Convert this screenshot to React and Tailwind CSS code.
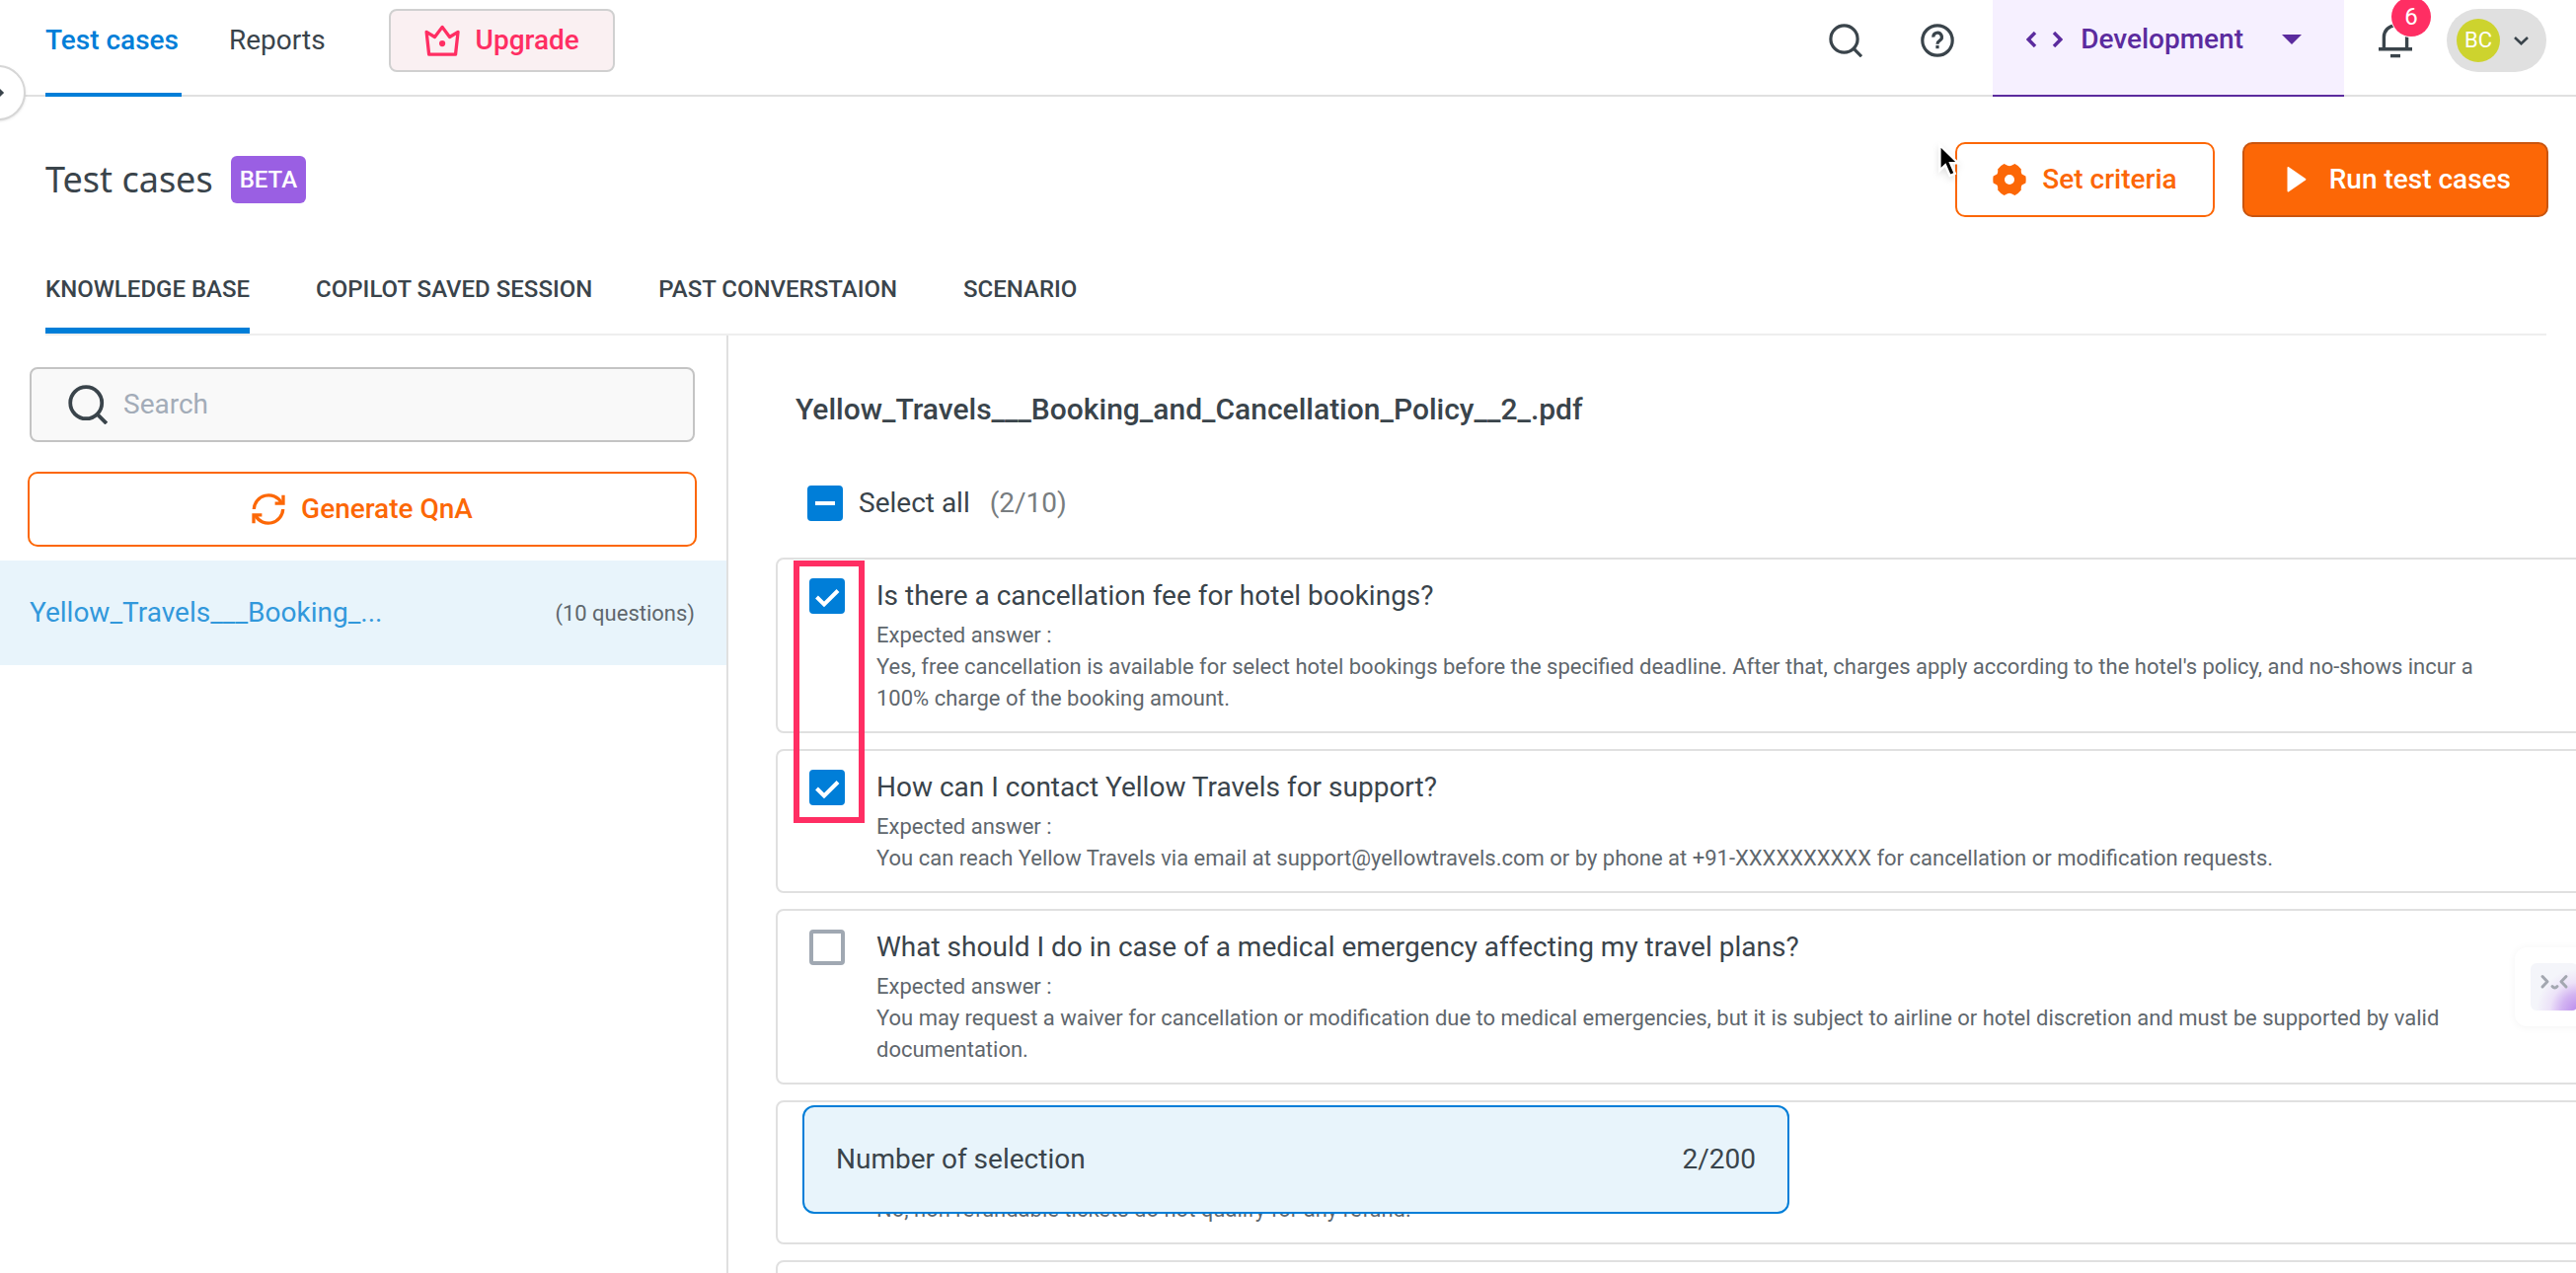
import React from 'react';

const cases = [
  {
    q: 'Is there a cancellation fee for hotel bookings?',
    a: "Yes, free cancellation is available for select hotel bookings before the specified deadline. After that, charges apply according to the hotel's policy, and no-shows incur a 100% charge of the booking amount.",
    checked: true,
  },
  {
    q: 'How can I contact Yellow Travels for support?',
    a: 'You can reach Yellow Travels via email at support@yellowtravels.com or by phone at +91-XXXXXXXXXX for cancellation or modification requests.',
    checked: true,
  },
  {
    q: 'What should I do in case of a medical emergency affecting my travel plans?',
    a: 'You may request a waiver for cancellation or modification due to medical emergencies, but it is subject to airline or hotel discretion and must be supported by valid documentation.',
    checked: false,
  },
  {
    q: 'Do non refundable tickets qualify for a refund?',
    a: 'No, non refundable tickets do not qualify for any refund.',
    checked: false,
  },
  { q: 'Can I modify my booking?', a: 'Yes, subject to airline policy.', checked: false },
];

function SearchIcon({ className }) {
  return (
    <svg viewBox="0 0 34 34" className={className} fill="none" stroke="currentColor" strokeWidth="3.2" aria-hidden="true">
      <circle cx="15.5" cy="15.5" r="13.6" />
      <path d="M25 25.2L33 33.2" />
    </svg>
  );
}

function HelpIcon() {
  return (
    <svg viewBox="0 0 34 34" className="size-[34px]" fill="none" stroke="currentColor" strokeWidth="3.2" aria-hidden="true">
      <circle cx="17" cy="17" r="15.2" />
      <path d="M12.8 13.6a4.3 4.3 0 1 1 6.5 3.5c-1.6 1-2.3 1.7-2.3 3.6" />
      <path d="M15.4 23.6h3.2" />
    </svg>
  );
}

function CrownIcon() {
  return (
    <svg viewBox="0 0 37 34" className="h-[34px] w-9" fill="none" stroke="currentColor" strokeWidth="3.4" strokeLinejoin="round" aria-hidden="true">
      <path d="M2.2 8.2L10.8 13.4L18.6 3L26.3 13.4L35 8.2L32.4 31.6H4.8Z" />
      <circle cx="18.6" cy="20.2" r="3.2" fill="currentColor" stroke="none" />
    </svg>
  );
}

function GearIcon() {
  return (
    <svg viewBox="0 0 34 34" className="size-[34px]" fill="currentColor" fillRule="evenodd" aria-hidden="true">
      <path d="M33.4 13.4Q34 17 33.4 20.6L29.6 22.4Q28.4 24.2 28.9 27.6Q26 31.4 22.4 33L19 31.2Q17 30.4 15 31.2L11.6 33Q8 31.4 5.1 27.6Q5.6 24.2 4.4 22.4L.6 20.6Q0 17 .6 13.4L4.4 11.6Q5.6 9.8 5.1 6.4Q8 2.6 11.6 1L15 2.8Q17 3.6 19 2.8L22.4 1Q26 2.6 28.9 6.4Q28.4 9.8 29.6 11.6ZM17 12a5 5 0 1 0 0 10a5 5 0 1 0 0-10Z" />
    </svg>
  );
}

function PlayIcon() {
  return (
    <svg viewBox="0 0 34 34" className="size-[34px]" fill="currentColor" aria-hidden="true">
      <path d="M7.5 5v23.5a1 1 0 0 0 1.5.7L26 17.6a1 1 0 0 0 0-1.6L9 4.2a1 1 0 0 0-1.5.8Z" />
    </svg>
  );
}

function RefreshIcon() {
  return (
    <svg viewBox="0 0 34 34" className="size-[34px]" fill="none" stroke="currentColor" strokeWidth="3.3" aria-hidden="true">
      <path d="M2.3 17A14.8 14.8 0 0 1 30 10.4" />
      <path d="M23.6 11.2H32V2.8" />
      <path d="M31.7 17A14.8 14.8 0 0 1 4 23.6" />
      <path d="M10.4 22.8H2V31.2" />
    </svg>
  );
}

function BellIcon() {
  return (
    <svg viewBox="0 0 34 36" className="h-9 w-[34px]" fill="none" stroke="currentColor" strokeWidth="3.4" aria-hidden="true">
      <path d="M5.4 27V14.5a11.6 11.6 0 0 1 23.2 0V27" />
      <path d="M0 26.8H34" />
      <path d="M12 33.6H22" />
    </svg>
  );
}

function Check({ checked, mixed, ...rest }) {
  return (
    <span className="grid size-9 shrink-0">
      <input
        type="checkbox"
        defaultChecked={checked}
        className="col-start-1 row-start-1 size-9 appearance-none rounded-sm border-4 border-[#a0a8b2] bg-white checked:border-[#007ed8] checked:bg-[#007ed8]"
        {...rest}
      />
      {checked && (
        <svg viewBox="0 0 36 36" className="pointer-events-none col-start-1 row-start-1 size-9" fill="none" stroke="white" strokeWidth="4" aria-hidden="true">
          {mixed ? <path d="M8 18H28" /> : <path d="M7.5 19L15 26.5L29 12.5" />}
        </svg>
      )}
    </span>
  );
}

function CaseCard({ item, id }) {
  return (
    <li className="flex gap-8 rounded-lg border-2 border-[#e0e0e0] py-[17px] pr-[84px] pl-8">
      <div className="flex h-10 items-center">
        <Check checked={item.checked} id={id} />
      </div>
      <div className="min-w-0 text-[22px] leading-8 text-[#5f676d]">
        <label htmlFor={id} className="mb-1 block text-[28px] leading-10 text-[#3a444b]">
          {item.q}
        </label>
        <p>Expected answer :</p>
        <p>{item.a}</p>
      </div>
    </li>
  );
}

function Header() {
  return (
    <header className="flex h-[98px] items-stretch pl-[46px] pr-[30px] text-[28px] leading-9 text-[#3a444b] shadow-[inset_0_-2px_0_#e0e0e0]">
      <nav className="flex items-stretch gap-12">
        <a href="#test-cases" className="flex min-w-[138px] items-center border-b-4 border-[#007ed8] pb-3 font-medium text-[#007ed8]">
          Test cases
        </a>
        <a href="#reports" className="flex items-center pb-4">
          Reports
        </a>
      </nav>
      <div className="ml-16 flex items-center pb-4">
        <button type="button" className="flex h-16 items-center gap-4 rounded-lg border-2 border-[#d0d0d0] bg-[#faf0f2] px-[34px] font-medium text-[#ff2e63]">
          <CrownIcon />
          Upgrade
        </button>
      </div>
      <div className="ml-auto flex items-center gap-[59px] pr-[39px] pb-4">
        <button type="button" aria-label="Search">
          <SearchIcon className="size-[34px]" />
        </button>
        <button type="button" aria-label="Help">
          <HelpIcon />
        </button>
      </div>
      <button type="button" aria-haspopup="listbox" className="flex items-center border-b-2 border-[#5b2b9e] bg-[#f6f0ff] pr-[43px] pb-4 pl-[34px] font-medium text-[#5b2b9e]">
        <svg viewBox="0 0 37 16" className="h-4 w-[37px]" fill="none" stroke="currentColor" strokeWidth="3.4" aria-hidden="true">
          <path d="M9 1L2.2 8L9 15" />
          <path d="M28 1L34.8 8L28 15" />
        </svg>
        <span className="ml-[18px]">Development</span>
        <svg viewBox="0 0 20 10" className="ml-[39px] h-[10px] w-5" fill="currentColor" aria-hidden="true">
          <path d="M0 0H20L10 10Z" />
        </svg>
      </button>
      <div className="flex items-center gap-[35px] pb-4 pl-[35px]">
        <button type="button" aria-label="Notifications" className="relative">
          <BellIcon />
          <span className="absolute -top-[26px] left-[13px] flex size-10 items-center justify-center rounded-full bg-[#ff2e63] text-2xl text-white ring-1 ring-white">
            6
          </span>
        </button>
        <button type="button" aria-label="Account" className="flex h-16 items-center gap-[14px] rounded-full bg-[#e0e0e0] pr-[18px] pl-[10px]">
          <span className="flex size-11 items-center justify-center rounded-full bg-[#cdd32e] text-[22px] text-white">BC</span>
          <svg viewBox="0 0 15 9" className="h-[9px] w-[15px]" fill="none" stroke="currentColor" strokeWidth="2.6" aria-hidden="true">
            <path d="M1 1L7.5 7.2L14 1" />
          </svg>
        </button>
      </div>
    </header>
  );
}

const tabs = ['KNOWLEDGE BASE', 'COPILOT SAVED SESSION', 'PAST CONVERSTAION', 'SCENARIO'];

export default function App() {
  return (
    <div className="relative flex h-screen flex-col overflow-hidden bg-white font-['Roboto',sans-serif] text-[#3a444b]">
      <Header />
      <button type="button" aria-label="Expand menu" className="absolute top-[66px] -left-[30px] size-14 rounded-full border-2 border-[#d6d6d6] bg-white shadow-sm">
        <svg viewBox="0 0 20 12" className="ml-[13px] h-3 w-5" fill="none" stroke="currentColor" strokeWidth="3" aria-hidden="true">
          <path d="M0 6H16" />
          <path d="M12 1L17 6L12 11" />
        </svg>
      </button>

      <div className="flex items-center pt-[46px] pr-7 pl-[46px]">
        <h1 className="font-['Noto_Sans',sans-serif] text-4xl">Test cases</h1>
        <span className="ml-[18px] rounded-md bg-[#9a5fe3] px-[9px] text-2xl leading-[48px] font-medium text-white">BETA</span>
        <div className="ml-auto flex gap-7 text-[28px] font-medium">
          <button type="button" className="flex h-[76px] items-center gap-4 rounded-[10px] border-2 border-[#fc6706] bg-white px-9 text-[#fc6706]">
            <GearIcon />
            Set criteria
          </button>
          <button type="button" className="flex h-[76px] items-center gap-4 rounded-[10px] border-2 border-[#c9550f] bg-[#fc6706] px-9 text-white">
            <PlayIcon />
            Run test cases
          </button>
        </div>
      </div>

      <nav className="mr-[30px] ml-[46px] flex gap-[67px] border-b-2 border-[#eeeeee] pt-[57px] text-2xl leading-8 font-medium">
        {tabs.map((t, i) => (
          <a key={t} href="#tab" className={i === 0 ? 'border-b-[6px] border-[#007ed8] pb-[23px]' : 'pb-[23px]'}>
            {t}
          </a>
        ))}
      </nav>

      <div className="flex min-h-0 flex-1">
        <aside className="w-[738px] shrink-0 border-r-2 border-[#e0e0e0] pt-8">
          <label className="mr-8 ml-[30px] flex h-[76px] items-center gap-4 rounded-lg border-2 border-[#c4c4c4] bg-[#f9f9f9] px-[37px]">
            <SearchIcon className="size-10 shrink-0" />
            <input type="search" placeholder="Search" aria-label="Search" className="w-full bg-transparent text-[28px] outline-none placeholder:text-[#a3acb8]" />
          </label>
          <button
            type="button"
            className="mt-[30px] mr-[30px] ml-7 flex h-[76px] w-[678px] items-center justify-center gap-4 rounded-[10px] border-2 border-[#fc6706] text-[28px] font-medium text-[#fc6706]"
          >
            <RefreshIcon />
            Generate QnA
          </button>
          <a href="#file" className="mt-[14px] flex h-[106px] items-center justify-between bg-[#e8f4fb] pr-8 pl-[30px]">
            <span className="text-[28px] text-[#3298db]">Yellow_Travels___Booking_...</span>
            <span className="text-[22px] text-[#5f676d]">(10 questions)</span>
          </a>
        </aside>

        <main className="min-w-0 flex-1 overflow-hidden pt-[53px] pl-12">
          <h2 className="ml-5 text-[30px] leading-[44px] font-medium">Yellow_Travels___Booking_and_Cancellation_Policy__2_.pdf</h2>
          <div className="mt-[55px] ml-8 flex h-9 items-center text-[28px]">
            <Check checked mixed id="all" />
            <label htmlFor="all" className="ml-4">
              Select all
            </label>
            <span className="ml-5 text-[#787d80]">(2/10)</span>
          </div>
          <div className="relative mt-[37px] -mr-6">
            <ul className="flex flex-col gap-4">
              {cases.map((c, i) => (
                <CaseCard key={c.q} item={c} id={`case-${i}`} />
              ))}
            </ul>
            <div className="pointer-events-none absolute top-[3px] left-[18px] h-[266px] w-[72px] border-[6px] border-[#ff2e63]" />
          </div>
        </main>
      </div>

      <div className="absolute bottom-[60px] left-[813px] flex h-[110px] w-[1000px] items-center justify-between rounded-xl border-2 border-[#007ed8] bg-[#e8f4fb] px-8 text-[28px]">
        <span>Number of selection</span>
        <span>2/200</span>
      </div>

      <button type="button" aria-label="Assistant" className="absolute top-[960px] -right-[18px] size-20 rounded-xl bg-white p-4 shadow-[0_1px_8px_rgba(0,0,0,0.05)]">
        <span className="flex size-12 rounded-md bg-[radial-gradient(circle_at_100%_100%,#b98bec_0%,#d3b5f2_25%,#ece2f8_42%,#f4f5fa_62%)]">
          <svg viewBox="0 0 48 48" className="size-12" fill="none" stroke="#a3a7b0" strokeWidth="3" strokeLinecap="round" strokeLinejoin="round" aria-hidden="true">
            <path d="M12 13.5L17 18.8L12 24" />
            <path d="M36 13.5L31 18.8L36 24" />
            <path d="M22 23.6Q24.5 26.4 27 23.6" />
          </svg>
        </span>
      </button>

      <svg viewBox="0 0 24 38" className="pointer-events-none absolute top-[144px] left-[1963px] h-[38px] w-6 drop-shadow-md" stroke="white" strokeWidth="2.4" aria-hidden="true">
        <path d="M2.4 3V28.6L8 23.2L12.6 34L17.8 31.8L13.2 21.2H21Z" fill="black" />
      </svg>
    </div>
  );
}
